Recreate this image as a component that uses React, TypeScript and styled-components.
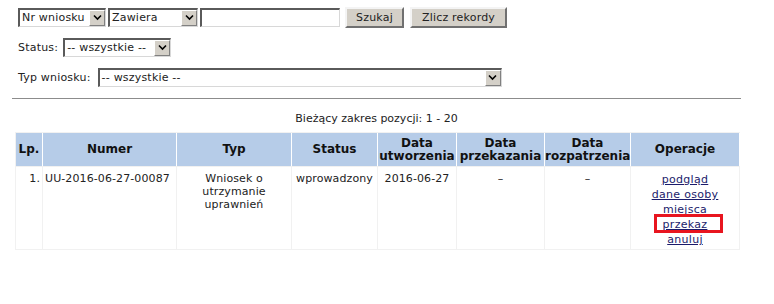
import React from "react";
import styled, { createGlobalStyle } from "styled-components";

const Global = createGlobalStyle`
  html, body { margin: 0; padding: 0; background: #fff; }
  body { font-family: Verdana, "DejaVu Sans", sans-serif; font-size: 11px; color: #222; }
`;

const Page = styled.div`
  width: 729px;
  padding: 7px 0 0 12px;
`;

const Form = styled.div`
  padding-left: 6px;
  display: flex;
  flex-direction: column;
  gap: 10px;
`;

const Row = styled.div`
  display: flex;
  align-items: center;
  gap: 2px;
  height: 20px;
`;

const Label = styled.span<{ $gap: number }>`
  margin-right: ${(p) => p.$gap}px;
  white-space: nowrap;
  letter-spacing: 0.2px;
`;

const SelectBox = styled.div<{ $w: number }>`
  width: ${(p) => p.$w}px;
  height: 19px;
  box-sizing: border-box;
  display: flex;
  align-items: stretch;
  border-top: 2px solid #5a5a5a;
  border-left: 2px solid #5a5a5a;
  border-bottom: 1px solid #d8d8d8;
  border-right: 1px solid #d8d8d8;
  background: #fff;
`;

const SelectText = styled.span`
  flex: 1;
  padding-left: 2px;
  line-height: 15px;
  white-space: nowrap;
  overflow: hidden;
  letter-spacing: 0.2px;
`;

const Arrow = styled.span`
  width: 16px;
  box-sizing: border-box;
  background: #d4d0c8;
  border: 1px solid #fff;
  border-right-color: #808080;
  border-bottom-color: #808080;
  display: flex;
  align-items: center;
  justify-content: center;
`;

const TextInput = styled.div`
  width: 140px;
  height: 19px;
  box-sizing: border-box;
  border-top: 2px solid #5a5a5a;
  border-left: 2px solid #5a5a5a;
  border-bottom: 1px solid #d8d8d8;
  border-right: 1px solid #d8d8d8;
  background: #fff;
`;

const Button = styled.button<{ $w: number }>`
  width: ${(p) => p.$w}px;
  height: 21px;
  font-family: inherit;
  font-size: 11px;
  letter-spacing: 0.2px;
  color: #222;
  background: #d4d0c8;
  border: 2px solid;
  border-color: #f4f4f4 #707070 #707070 #f4f4f4;
  padding: 0;
  margin-left: ${(p) => (p.$w < 70 ? 3 : 4)}px;
`;

const Rule = styled.hr`
  border: 0;
  border-top: 1px solid #8c8c8c;
  margin: 11px 0 0 0;
  height: 0;
`;

const Range = styled.div`
  text-align: center;
  margin: 13px 0 6px 0;
  line-height: 14px;
`;

const Table = styled.table`
  margin-left: 3px;
  width: 725px;
  table-layout: fixed;
  border-collapse: separate;
  border-spacing: 1px;
  background: #f1f1f1;
`;

const Th = styled.th<{ $w: number }>`
  width: ${(p) => p.$w}px;
  background: #b6cce8;
  font-weight: bold;
  font-size: 12px;
  letter-spacing: 0;
  height: 33px;
  padding: 0;
  line-height: 13px;
  color: #111;
  white-space: nowrap;
  box-shadow: 1px 0 0 #fff;
`;

const Td = styled.td<{ $align?: string }>`
  background: #fff;
  vertical-align: top;
  text-align: ${(p) => p.$align || "center"};
  padding: 5px 2px 0 2px;
  line-height: 13px;
  height: 77px;
  white-space: nowrap;
  letter-spacing: 0.1px;
`;

const Ops = styled.div`
  display: flex;
  flex-direction: column;
  align-items: center;
  padding-top: 0;
`;

const OpLink = styled.a<{ $marked?: boolean }>`
  color: #1b1b6b;
  text-decoration: underline;
  line-height: 15px;
  letter-spacing: 0.3px;
  position: relative;
  ${(p) =>
    p.$marked &&
    `
    &::after {
      content: "";
      position: absolute;
      left: -9px;
      right: -16px;
      top: -3px;
      bottom: -1px;
      border: 3px solid #e8151f;
    }
  `}
`;

const Chevron = () => (
  <svg width="9" height="7" viewBox="0 0 9 7">
    <path d="M1 1.5 L4.5 5 L8 1.5" fill="none" stroke="#000" strokeWidth="1.6" />
  </svg>
);

const Select = ({ w, value }: { w: number; value: string }) => (
  <SelectBox $w={w}>
    <SelectText>{value}</SelectText>
    <Arrow>
      <Chevron />
    </Arrow>
  </SelectBox>
);

export default function App() {
  return (
    <>
      <Global />
      <Page>
        <Form>
          <Row>
            <Select w={88} value="Nr wniosku" />
            <Select w={90} value="Zawiera" />
            <TextInput />
            <Button $w={59}>Szukaj</Button>
            <Button $w={97}>Zlicz rekordy</Button>
          </Row>
          <Row>
            <Label $gap={3}>Status:</Label>
            <Select w={108} value="-- wszystkie --" />
          </Row>
          <Row>
            <Label $gap={5}>Typ wniosku:</Label>
            <Select w={404} value="-- wszystkie --" />
          </Row>
        </Form>
        <Rule />
        <Range>Bieżący zakres pozycji: 1 - 20</Range>
        <Table>
          <thead>
            <tr>
              <Th $w={26}>Lp.</Th>
              <Th $w={133}>Numer</Th>
              <Th $w={114}>Typ</Th>
              <Th $w={85}>Status</Th>
              <Th $w={78}>
                Data
                <br />
                utworzenia
              </Th>
              <Th $w={87}>
                Data
                <br />
                przekazania
              </Th>
              <Th $w={85}>
                Data
                <br />
                rozpatrzenia
              </Th>
              <Th $w={108}>Operacje</Th>
            </tr>
          </thead>
          <tbody>
            <tr>
              <Td $align="right">1.</Td>
              <Td $align="left">UU-2016-06-27-00087</Td>
              <Td>
                Wniosek o
                <br />
                utrzymanie
                <br />
                uprawnień
              </Td>
              <Td>wprowadzony</Td>
              <Td>2016-06-27</Td>
              <Td>–</Td>
              <Td>–</Td>
              <Td>
                <Ops>
                  <OpLink href="#">podgląd</OpLink>
                  <OpLink href="#">dane osoby</OpLink>
                  <OpLink href="#">miejsca</OpLink>
                  <OpLink href="#" $marked>
                    przekaz
                  </OpLink>
                  <OpLink href="#">anuluj</OpLink>
                </Ops>
              </Td>
            </tr>
          </tbody>
        </Table>
      </Page>
    </>
  );
}
